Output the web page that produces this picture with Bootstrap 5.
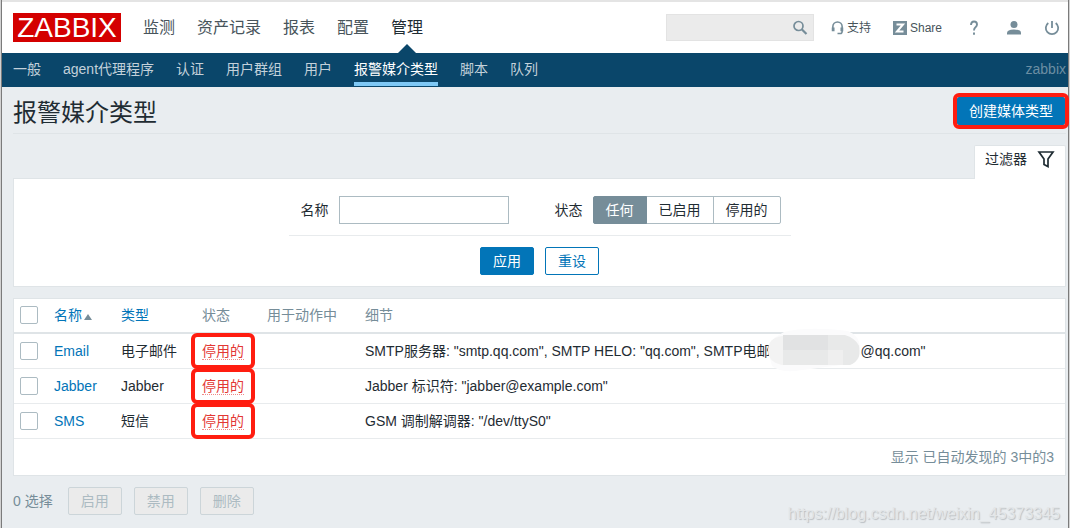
<!DOCTYPE html>
<html lang="zh-CN">
<head>
<meta charset="utf-8">
<meta name="viewport" content="width=device-width, initial-scale=1">
<title>Zabbix: 报警媒介类型</title>
<link href="https://cdn.jsdelivr.net/npm/bootstrap@5.3.0/dist/css/bootstrap.min.css" rel="stylesheet">
<style>
:root { --zbx-blue: #0275b8; --zbx-navy: #0a466a; --zbx-grey: #768d99; --zbx-edge: #dfe4e7; }
body { font-family: "Liberation Sans", "Noto Sans CJK SC", sans-serif; font-size: 14px; line-height: 20px; color: #1f2c33; background: #d2d2d2; }
a { color: var(--zbx-blue); text-decoration: none; }
.app-frame { min-height: 100vh; margin: 0 1px; background: #e9edf0; border: 1px solid #7b7b7b; border-width: 0 1px; }
.top-bar { height: 53px; border-top: 2px solid #e4e4e4; padding: 0 8px 0 11px; }
.logo { width: 108px; height: 29px; background: #d40000; color: #fff; font-size: 28px; line-height: 30px; text-align: center; }
.main-menu { gap: 22px; margin-left: 22px; font-size: 16px; }
.main-menu a { color: #48545b; line-height: 51px; display: block; position: relative; }
.main-menu a.active { color: #1f2c33; }
.main-menu a.active::after { content: ""; position: absolute; left: 50%; bottom: 0; margin-left: -9px; border: 9px solid transparent; border-top: 0; border-bottom-color: var(--zbx-navy); }
.search-box { width: 148px; height: 27px; border: 1px solid #e3e3e3; background: #ebebeb; }
.search-box input { min-width: 0; outline: 0; }
.icon-btn { border: 0; background: none; padding: 0; color: var(--zbx-grey); line-height: 0; }
.tool-set { gap: 22px; margin-left: 17px; }
.tool-link { font-size: 12px; color: #48545b; display: flex; align-items: center; gap: 3px; }
.sub-bar { height: 34px; background: var(--zbx-navy); padding: 0 2px 0 11px; }
.sub-menu { gap: 22px; }
.sub-menu a { color: #c3d1da; display: block; padding: 6px 0 3px; border-bottom: 4px solid transparent; }
.sub-menu li { height: 33px; }
.sub-menu a.active { color: #fff; border-color: #7ec8f5; }
.user-name { color: #6c8ea3; line-height: 32px; }
.content { padding: 0 2px 0 11px; }
.title-row { height: 47px; border-bottom: 1px solid var(--zbx-edge); }
.title-row h1 { font-size: 24px; line-height: 30px; font-weight: 400; margin: 11px 0 0; }
.btn { --bs-btn-font-size: 14px; --bs-btn-line-height: 20px; --bs-btn-padding-y: 3px; --bs-btn-padding-x: 12px; --bs-btn-border-radius: 2px; }
.btn-primary { --bs-btn-bg: var(--zbx-blue); --bs-btn-border-color: var(--zbx-blue); }
.btn-outline-primary { --bs-btn-color: var(--zbx-blue); --bs-btn-border-color: var(--zbx-blue); }
.btn-action { --bs-btn-disabled-bg: #ebebeb; --bs-btn-disabled-color: #acbbc2; --bs-btn-disabled-border-color: #ccd5d9; --bs-btn-disabled-opacity: 1; }
.marked { position: relative; }
.marked::after { content: ""; position: absolute; inset: -5px; border: 4px solid #ff1d10; border-radius: 6px; pointer-events: none; }
.btn-create { margin-top: 10px; margin-right: 1px; --bs-btn-padding-x: 11px; }
.panel { background: #fff; border: 1px solid var(--zbx-edge); }
.filter-tab { border: 1px solid var(--zbx-edge); border-bottom: 0; background: #fff; border-radius: 2px 2px 0 0; height: 34px; padding: 0 10px 8px; gap: 10px; margin: 11px 0 -1px; color: #1f2c33; position: relative; }
.filter-panel { padding-top: 17px; }
.filter-fields { width: 502px; padding: 0 10px 11px 12px; border-bottom: 1px solid #e8ebed; }
.filter-fields input[type=text] { width: 170px; height: 28px; border: 1px solid #acbbc2; padding: 0 5px; margin-left: 10px; }
.filter-actions { gap: 11px; padding: 11px 0; }
.state-group { margin-left: 10px; }
.state-group .btn { --bs-btn-border-color: #acbbc2; --bs-btn-color: #1f2c33; --bs-btn-active-bg: var(--zbx-grey); --bs-btn-active-border-color: var(--zbx-grey); --bs-btn-active-color: #fff; }
.list-panel { margin-top: 11px; }
.media-table { table-layout: fixed; border-color: #e8ebed; --bs-table-color: #1f2c33; --bs-table-bg: #fff; }
.media-table > :not(caption) > * > * { padding: 7px 5px; }
.media-table > thead > tr > * { border-bottom: 0; padding: 6px 5px 7px; font-weight: 400; color: var(--zbx-grey); white-space: nowrap; }
.media-table thead { border-bottom: 2px solid var(--zbx-edge); }
.media-table .pick { padding-left: 6px; }
.media-table .pick input { display: block; margin: 1px 0; width: 18px; height: 18px; border: 1px solid #acbbc2; border-radius: 2px; }
.c-pick { width: 35px; } .c-name { width: 67px; } .c-type { width: 81px; } .c-state { width: 65px; } .c-used { width: 98px; }
.state-off { color: #e33734; display: inline-block; line-height: 16px; border-bottom: 1px dotted #f08a88; }
.state-off.marked::after { inset: -10px -11px; }
.sort-up { display: inline-block; margin-left: -2px; border: 4px solid transparent; border-top: 0; border-bottom: 6px solid var(--zbx-grey); }
.masked { display: inline-block; position: relative; width: 90px; height: 20px; vertical-align: top; }
.masked svg { position: absolute; left: -2px; top: -13px; }
.table-foot { color: var(--zbx-grey); padding: 8px 11px; text-align: right; }
.action-row { gap: 12px; padding: 11px 0 0; }
.picked { color: var(--zbx-grey); margin-right: 3px; }
.watermark { color: #e3e6e8; text-shadow: 1px 1px 1px #b9bec2; font-size: 16px; margin: 17px 6px 0 auto; }
</style>
</head>
<body>
<div class="app-frame">
  <header class="top-bar bg-white d-flex align-items-center">
    <a href="#" class="logo">ZABBIX</a>
    <nav class="main-menu d-flex">
      <a href="#">监测</a><a href="#">资产记录</a><a href="#">报表</a><a href="#">配置</a><a href="#" class="active">管理</a>
    </nav>
    <form class="search-box d-flex align-items-center ms-auto pe-1">
      <input type="text" class="border-0 bg-transparent flex-grow-1" aria-label="搜索">
      <button type="button" class="icon-btn" aria-label="搜索"><svg width="18" height="18" viewBox="0 0 18 18" fill="none" stroke="currentColor" stroke-width="1.700"><circle cx="7.500" cy="7" r="4.500"/><path d="M10.700 10.200 15.500 15" stroke-width="2.200"/></svg></button>
    </form>
    <div class="tool-set d-flex align-items-center">
      <a href="#" class="tool-link"><svg width="13" height="15" viewBox="0 0 14 16" fill="none" stroke="#768d99" stroke-width="1.700"><path d="M2 10V7a5 5 0 0 1 10 0v5q0 2.500-2 2.500H7"/><path d="M2.300 8v4M11.700 8v4" stroke-width="3"/></svg>支持</a>
      <a href="#" class="tool-link"><svg width="14" height="14" viewBox="0 0 14 14"><path d="M0 0h14v14H0z" fill="#768d99"/><path d="M3.500 3.500h6.500L4 10.500h6.500" fill="none" stroke="#fff" stroke-width="2"/></svg>Share</a>
      <a href="#" class="icon-btn ms-1" aria-label="帮助"><svg width="12" height="16" viewBox="0 0 12 16" fill="none" stroke="currentColor" stroke-width="1.900"><path d="M3 5q0-3.500 3-3.500T9 4.500Q9 6 7.500 7.200T6 10.500M6 12.500v2.300"/></svg></a>
      <a href="#" class="icon-btn ms-1" aria-label="用户"><svg width="16" height="16" viewBox="0 0 16 16" fill="currentColor"><circle cx="8" cy="4.500" r="3.500"/><path d="M1 14.500V13q0-3.500 7-3.500t7 3.500v1.500z"/></svg></a>
      <a href="#" class="icon-btn" aria-label="退出"><svg width="16" height="16" viewBox="0 0 16 16" fill="none" stroke="currentColor" stroke-width="1.800"><path d="M8 1v7M4.300 3a6.200 6.200 0 1 0 7.400 0"/></svg></a>
    </div>
  </header>
  <div class="sub-bar d-flex justify-content-between">
    <nav>
      <ul class="sub-menu list-unstyled d-flex mb-0">
        <li><a href="#">一般</a></li><li><a href="#">agent代理程序</a></li><li><a href="#">认证</a></li><li><a href="#">用户群组</a></li><li><a href="#">用户</a></li><li><a href="#" class="active">报警媒介类型</a></li><li><a href="#">脚本</a></li><li><a href="#">队列</a></li>
      </ul>
    </nav>
    <span class="user-name">zabbix</span>
  </div>

  <main class="content">
    <div class="title-row d-flex justify-content-between align-items-start">
      <h1>报警媒介类型</h1>
      <button type="button" class="btn btn-primary btn-create marked">创建媒体类型</button>
    </div>

    <div class="d-flex justify-content-end">
      <a href="#" class="filter-tab d-flex align-items-center">过滤器
        <svg width="18" height="18" viewBox="0 0 18 18" fill="none" stroke="#1f2c33" stroke-width="1.700"><path d="M2 2h14l-5 7v7.500l-4-2V9z"/></svg></a>
    </div>
    <form class="panel filter-panel d-flex flex-column align-items-center">
      <div class="filter-fields d-flex align-items-center">
        <label for="name">名称</label><input type="text" id="name">
        <span class="ms-auto">状态</span>
        <div class="state-group btn-group" role="group" aria-label="状态">
          <input type="radio" class="btn-check" name="state" id="any" checked><label class="btn" for="any">任何</label>
          <input type="radio" class="btn-check" name="state" id="on"><label class="btn" for="on">已启用</label>
          <input type="radio" class="btn-check" name="state" id="off"><label class="btn" for="off">停用的</label>
        </div>
      </div>
      <div class="filter-actions d-flex">
        <button type="button" class="btn btn-primary">应用</button>
        <button type="button" class="btn btn-outline-primary">重设</button>
      </div>
    </form>

    <div class="panel list-panel">
      <table class="table media-table mb-0">
        <colgroup><col class="c-pick"><col class="c-name"><col class="c-type"><col class="c-state"><col class="c-used"><col></colgroup>
        <thead><tr>
          <th class="pick"><input type="checkbox" class="form-check-input" aria-label="全选"></th>
          <th><a href="#">名称 <span class="sort-up"></span></a></th><th><a href="#">类型</a></th><th>状态</th><th>用于动作中</th><th>细节</th>
        </tr></thead>
        <tbody>
          <tr><td class="pick"><input type="checkbox" class="form-check-input" aria-label="Email"></td><td><a href="#">Email</a></td><td>电子邮件</td><td><a href="#" class="state-off marked">停用的</a></td><td></td>
            <td>SMTP服务器: "smtp.qq.com", SMTP HELO: "qq.com", SMTP电邮<span class="masked"><svg width="92" height="46" viewBox="0 0 92 46"><path d="M16 4Q40-2 80 3 92 8 92 20T80 36Q50 40 34 42 14 46 4 38-2 20 6 10z" fill="#fbfbfc"/><path d="M14 8h63q15 4 15 15T80 37H14Q0 34 0 22T14 8z" fill="#f3f3f3"/><path d="M15 7h62q10 3 14 11v10q-3 7-9 9H15z" fill="#e8e9e9"/><path d="M15 7h45v15H15z" fill="#e1e2e3"/><path d="M60 22h15v15H60z" fill="#efefef"/></svg></span>@qq.com"</td></tr>
          <tr><td class="pick"><input type="checkbox" class="form-check-input" aria-label="Jabber"></td><td><a href="#">Jabber</a></td><td>Jabber</td><td><a href="#" class="state-off marked">停用的</a></td><td></td><td>Jabber 标识符: "jabber@example.com"</td></tr>
          <tr><td class="pick"><input type="checkbox" class="form-check-input" aria-label="SMS"></td><td><a href="#">SMS</a></td><td>短信</td><td><a href="#" class="state-off marked">停用的</a></td><td></td><td>GSM 调制解调器: "/dev/ttyS0"</td></tr>
        </tbody>
      </table>
      <div class="table-foot">显示 已自动发现的 3中的3</div>
    </div>

    <div class="action-row d-flex align-items-start">
      <span class="picked pt-1">0 选择</span>
      <button type="button" class="btn btn-action" disabled>启用</button>
      <button type="button" class="btn btn-action" disabled>禁用</button>
      <button type="button" class="btn btn-action" disabled>删除</button>
      <span class="watermark">https://blog.csdn.net/weixin_45373345</span>
    </div>
  </main>
</div>
<script src="https://cdn.jsdelivr.net/npm/bootstrap@5.3.0/dist/js/bootstrap.bundle.min.js"></script>
</body>
</html>
